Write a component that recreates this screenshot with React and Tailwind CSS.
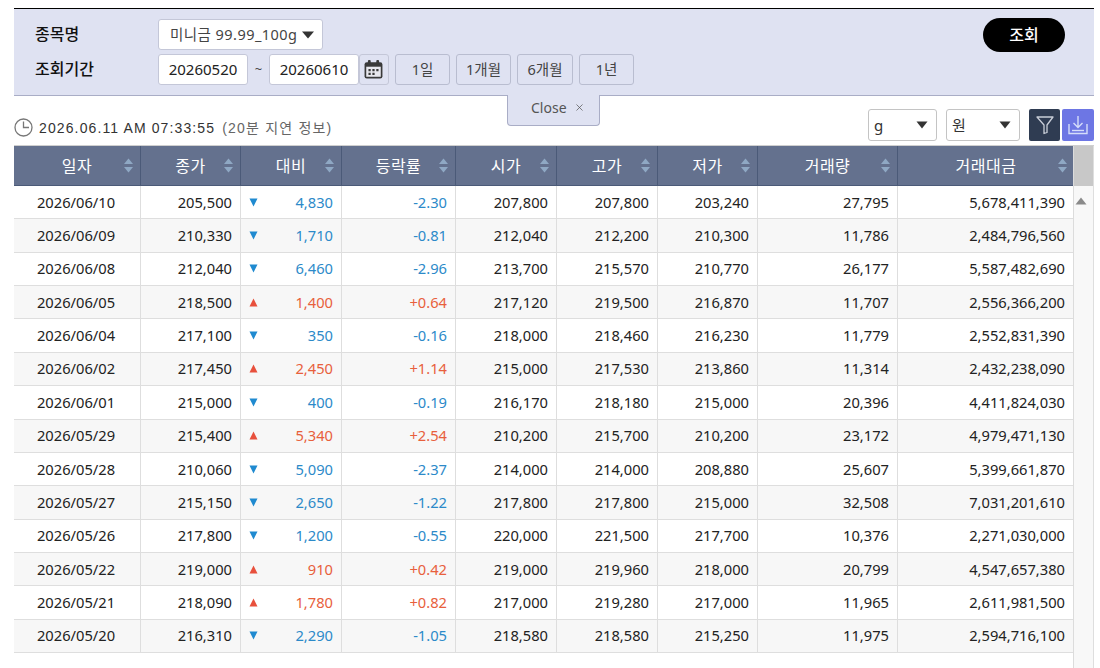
import React from "react";
import { X } from "lucide-react";

const rows = [
  ["2026/06/10", "205,500", -1, "4,830", "-2.30", "207,800", "207,800", "203,240", "27,795", "5,678,411,390"],
  ["2026/06/09", "210,330", -1, "1,710", "-0.81", "212,040", "212,200", "210,300", "11,786", "2,484,796,560"],
  ["2026/06/08", "212,040", -1, "6,460", "-2.96", "213,700", "215,570", "210,770", "26,177", "5,587,482,690"],
  ["2026/06/05", "218,500", 1, "1,400", "+0.64", "217,120", "219,500", "216,870", "11,707", "2,556,366,200"],
  ["2026/06/04", "217,100", -1, "350", "-0.16", "218,000", "218,460", "216,230", "11,779", "2,552,831,390"],
  ["2026/06/02", "217,450", 1, "2,450", "+1.14", "215,000", "217,530", "213,860", "11,314", "2,432,238,090"],
  ["2026/06/01", "215,000", -1, "400", "-0.19", "216,170", "218,180", "215,000", "20,396", "4,411,824,030"],
  ["2026/05/29", "215,400", 1, "5,340", "+2.54", "210,200", "215,700", "210,200", "23,172", "4,979,471,130"],
  ["2026/05/28", "210,060", -1, "5,090", "-2.37", "214,000", "214,000", "208,880", "25,607", "5,399,661,870"],
  ["2026/05/27", "215,150", -1, "2,650", "-1.22", "217,800", "217,800", "215,000", "32,508", "7,031,201,610"],
  ["2026/05/26", "217,800", -1, "1,200", "-0.55", "220,000", "221,500", "217,700", "10,376", "2,271,030,000"],
  ["2026/05/22", "219,000", 1, "910", "+0.42", "219,000", "219,960", "218,000", "20,799", "4,547,657,380"],
  ["2026/05/21", "218,090", 1, "1,780", "+0.82", "217,000", "219,280", "217,000", "11,965", "2,611,981,500"],
  ["2026/05/20", "216,310", -1, "2,290", "-1.05", "218,580", "218,580", "215,250", "11,975", "2,594,716,100"],
];

const columns = ["일자", "종가", "대비", "등락률", "시가", "고가", "저가", "거래량", "거래대금"];
const gridCols = "grid grid-cols-[127px_100px_101px_114px_101px_101px_100px_140px_176px]";

function SortIcon() {
  return (
    <svg width="9" height="15" viewBox="0 0 9 15" className="absolute right-[7px] top-[12px]">
      <path d="M4.5 0.5 L9 6 H0 Z" fill="#8fa8c4" />
      <path d="M4.5 14.5 L9 9 H0 Z" fill="#8fa8c4" />
    </svg>
  );
}

function PeriodButton({ children, className = "w-[55px]" }) {
  return (
    <button className={`h-[31px] rounded-[3px] border border-[#b9bdd0] text-[14.5px] text-[#444] ${className}`}>
      {children}
    </button>
  );
}

function Dropdown({ label, className }) {
  return (
    <div className={`h-[32px] rounded-[3px] border border-[#c4c4c4] bg-white flex items-center justify-between pl-[5px] pr-[8px] text-[15px] text-[#333] ${className}`}>
      <span>{label}</span>
      <svg width="12" height="8" viewBox="0 0 12 8"><path d="M0.5 0.5 H11.5 L6 7.5 Z" fill="#333" /></svg>
    </div>
  );
}

export default function App() {
  return (
    <div className="w-[1100px] h-[668px] overflow-hidden bg-white pt-[8px] pl-[14px] text-[#222] font-['Noto_Sans','Noto_Sans_CJK_KR',sans-serif]">
      <div className="w-[1080px]">
        {/* search panel */}
        <div className="h-[88px] bg-[#dfe2f2] border-t border-t-black border-b border-b-[#a9adc6] pl-[21px] pr-[29px] pt-[10px] flex justify-between">
          <div className="flex flex-col gap-[4px]">
            <div className="flex items-center h-[31px]">
              <div className="w-[123px] mt-[-2px] text-[16px] font-medium text-[#111]">종목명</div>
              <div className="h-[31px] w-[165px] rounded-[3px] border border-[#c4c7d8] bg-white flex items-center pl-[11px] text-[14.5px] tracking-[0.45px] text-[#444] whitespace-nowrap">
                미니금 99.99_100g
                <svg width="12" height="8" viewBox="0 0 12 8" className="ml-[5px]"><path d="M0 0.5 H12 L6 7.5 Z" fill="#333" /></svg>
              </div>
            </div>
            <div className="flex items-center h-[31px]">
              <div className="w-[123px] mt-[-2px] text-[16px] font-medium text-[#111]">조회기간</div>
              <div className="h-[31px] w-[90px] rounded-[3px] border border-[#c4c7d8] bg-white flex items-center justify-center text-[15px]">20260520</div>
              <div className="w-[21px] text-center text-[13px] text-[#444]">~</div>
              <div className="h-[31px] w-[90px] rounded-[3px] border border-[#c4c7d8] bg-white flex items-center justify-center text-[15px]">20260610</div>
              <button className="h-[31px] w-[30px] pr-[2px] rounded-[3px] border border-[#c4c7d8] flex items-center justify-center">
                <svg width="19" height="19" viewBox="0 0 17 17">
                  <rect x="0.5" y="2" width="16" height="14.5" rx="2" fill="#3a3a3a" />
                  <rect x="3.5" y="0" width="2.5" height="4" rx="1" fill="#3a3a3a" />
                  <rect x="11" y="0" width="2.5" height="4" rx="1" fill="#3a3a3a" />
                  <rect x="2" y="6" width="13" height="9" fill="#e8e8ee" />
                  <path d="M4 8h2v2H4zM7.5 8h2v2h-2zM11 8h2v2h-2zM4 11.5h2v2H4zM7.5 11.5h2v2h-2z" fill="#3a3a3a" />
                </svg>
              </button>
              <div className="flex gap-[6px] ml-[6px]">
                <PeriodButton>1일</PeriodButton>
                <PeriodButton>1개월</PeriodButton>
                <PeriodButton className="w-[56px]">6개월</PeriodButton>
                <PeriodButton>1년</PeriodButton>
              </div>
            </div>
          </div>
          <button className="mt-[-1px] h-[34px] w-[82px] rounded-full bg-black text-white text-[16px] font-medium">조회</button>
        </div>

        {/* close tab and info row */}
        <div className="relative h-[49px] flex items-start justify-between">
          <div className="absolute left-[493px] top-[-1px] h-[31px] w-[93px] pl-[23px] pb-[5px] bg-[#dfe2f2] border border-t-0 border-[#a9adc6] rounded-b-[4px] flex items-center gap-[7px] text-[14px] text-[#555]">
            Close <X size={11} strokeWidth={1.6} />
          </div>
          <div className="flex items-center mt-[22px] text-[14px] font-['Liberation_Sans','Noto_Sans_CJK_KR',sans-serif] tracking-[1.12px]">
            <svg width="19" height="19" viewBox="0 0 19 19" className="mr-[6px] mt-[-2px]">
              <circle cx="9.5" cy="9.5" r="8.5" fill="none" stroke="#777" strokeWidth="1.3" />
              <path d="M9.5 3.5 V9.5 H15" fill="none" stroke="#777" strokeWidth="1.3" />
            </svg>
            <span className="text-[#333]">2026.06.11 AM 07:33:55</span>
            <span className="ml-[7px] tracking-[1.2px] text-[#666]">(20분 지연 정보)</span>
          </div>
          <div className="flex items-center mt-[13px]">
            <Dropdown label="g" className="w-[69px]" />
            <Dropdown label="원" className="w-[74px] ml-[9px]" />
            <button className="ml-[9px] h-[32px] w-[31px] rounded-[2px] bg-[#2f3c52] flex items-center justify-center">
              <svg width="18" height="20" viewBox="0 0 18 20"><path d="M1 2 H17 L11 10 V17.5 L8 18.5 V10 Z" fill="none" stroke="#c9ced8" strokeWidth="1.3" strokeLinejoin="round" /></svg>
            </button>
            <button className="ml-[2px] h-[32px] w-[32px] rounded-[2px] bg-[#6d76e4] flex items-center justify-center">
              <svg width="22" height="22" viewBox="0 0 22 22" fill="none" stroke="#d5ddfa" strokeWidth="1.4">
                <path d="M11 2 V13 M6.5 9 L11 13.5 L15.5 9" />
                <path d="M2 10 V19.5 H20 V10" />
                <path d="M5 16.5 H17" />
              </svg>
            </button>
          </div>
        </div>

        {/* grid */}
        <div className="flex h-[523px] border-t border-t-[#cfcfcf]">
          <div className="w-[1060px] border-r border-r-[#dcdcdc]">
            <div className={`${gridCols} h-[40px] bg-[#64718e] border-b border-b-[#4b5a78] text-white text-[16px] tracking-[0.5px]`}>
              {columns.map((col, i) => (
                <div key={col} className={`relative flex items-center justify-center ${i < 8 ? "border-r border-r-[#4b5a78]" : ""}`}>
                  {col}
                  <SortIcon />
                </div>
              ))}
            </div>
            {rows.map((row, idx) => {
              const up = row[2] > 0;
              const color = up ? "text-[#e8603c]" : "text-[#2c8ac9]";
              return (
                <div key={row[0]} className={`${gridCols} h-[33.36px] border-b border-b-[#dedede] text-[14.7px] text-[#222] ${idx % 2 ? "bg-[#f7f7f7]" : "bg-white"}`}>
                  <div className="flex items-center justify-center pb-[1px] pr-[2px] border-r border-r-[#dedede]">{row[0]}</div>
                  <div className="flex items-center justify-end pb-[1px] pr-[8px] border-r border-r-[#dedede]">{row[1]}</div>
                  <div className={`flex items-center justify-between pl-[8px] pr-[8px] border-r border-r-[#dedede] ${color}`}>
                    <svg width="9" height="9" viewBox="0 0 9 9">
                      {up ? <path d="M4.5 0.5 L8.5 8.5 H0.5 Z" fill="#e8503c" /> : <path d="M0.5 0.5 H8.5 L4.5 8.5 Z" fill="#1f8ad0" />}
                    </svg>
                    <span className="pb-[1px]">{row[3]}</span>
                  </div>
                  <div className={`flex items-center justify-end pb-[1px] pr-[8px] border-r border-r-[#dedede] ${color}`}>{row[4]}</div>
                  <div className="flex items-center justify-end pb-[1px] pr-[8px] border-r border-r-[#dedede]">{row[5]}</div>
                  <div className="flex items-center justify-end pb-[1px] pr-[8px] border-r border-r-[#dedede]">{row[6]}</div>
                  <div className="flex items-center justify-end pb-[1px] pr-[8px] border-r border-r-[#dedede]">{row[7]}</div>
                  <div className="flex items-center justify-end pb-[1px] pr-[8px] border-r border-r-[#dedede]">{row[8]}</div>
                  <div className="flex items-center justify-end pb-[1px] pr-[9px]">{row[9]}</div>
                </div>
              );
            })}
          </div>
          {/* scrollbar */}
          <div className="w-[20px] bg-[#f8f8f8] border-r border-r-[#dedede]">
            <div className="h-[40px] bg-[#c8c8c8]" />
            <svg width="12" height="8" viewBox="0 0 12 8" className="ml-[1px] mt-[11px]"><path d="M6 0.5 L11.5 7.5 H0.5 Z" fill="#8a8a8a" /></svg>
          </div>
        </div>
      </div>
    </div>
  );
}
